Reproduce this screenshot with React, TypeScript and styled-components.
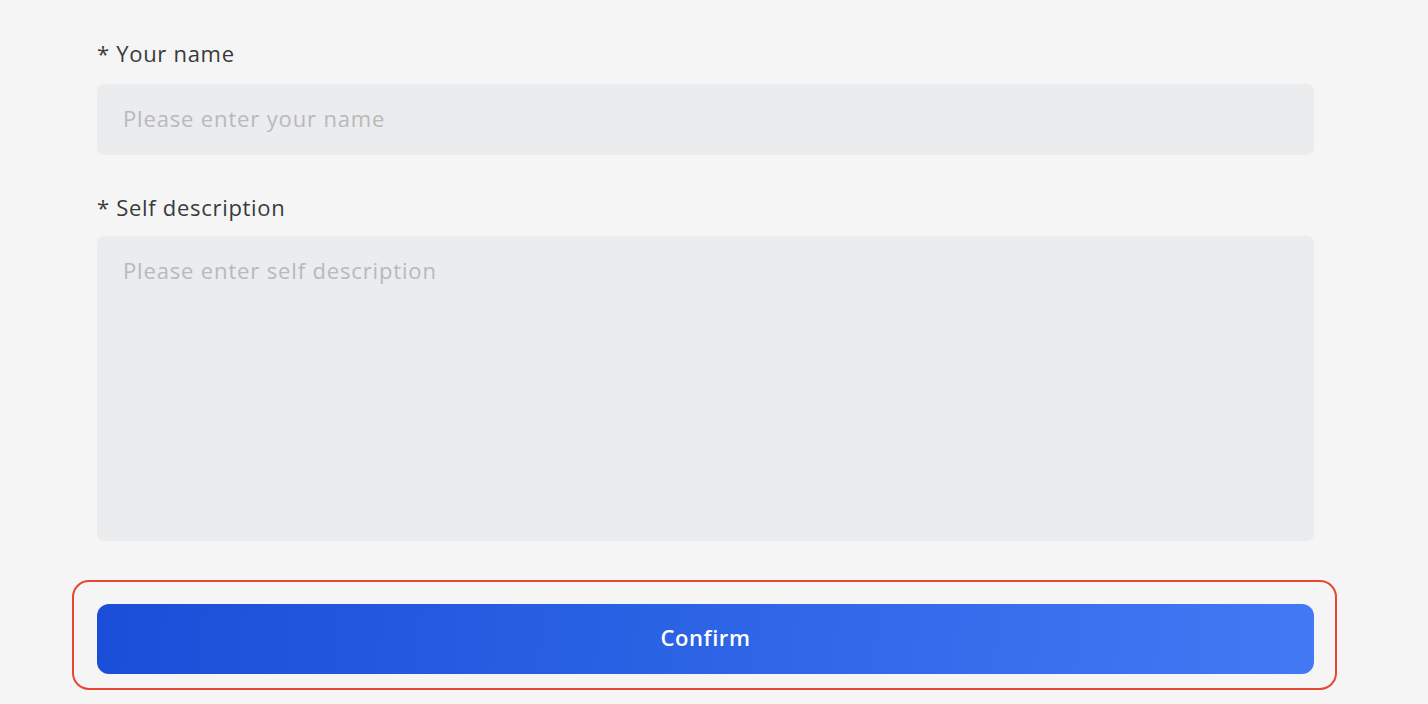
import React from "react";
import styled, { createGlobalStyle } from "styled-components";

const Global = createGlobalStyle`
  html, body {
    margin: 0;
    padding: 0;
    background: #f5f5f5;
  }
  body {
    font-family: "Open Sans", "Noto Sans", sans-serif;
  }
  * { box-sizing: border-box; }
`;

const Page = styled.div`
  width: 1428px;
  height: 704px;
  overflow: hidden;
  background: #f5f5f5;
  padding: 38px 0 0 72px;
`;

const Form = styled.form`
  display: flex;
  flex-direction: column;
  width: 1265px;
`;

const Field = styled.div<{ $gap: number; $mb: number }>`
  display: flex;
  flex-direction: column;
  gap: ${(p) => p.$gap}px;
  padding: 0 23px 0 25px;
  margin-bottom: ${(p) => p.$mb}px;
`;

const Label = styled.label`
  font-size: 22px;
  line-height: 30px;
  letter-spacing: 0.7px;
  color: #3a3a3a;
  font-weight: 400;
`;

const fieldBase = `
  width: 100%;
  border: none;
  outline: none;
  background: #ebecee;
  border-radius: 7px;
  font-family: "Open Sans", "Noto Sans", sans-serif;
  font-size: 22px;
  letter-spacing: 0.85px;
  color: #333;
  padding: 0 26px;
  &::placeholder { color: #b8b9bb; }
`;

const Input = styled.input`
  ${fieldBase}
  height: 71px;
  padding-bottom: 3px;
`;

const TextArea = styled.textarea`
  ${fieldBase}
  height: 305px;
  resize: none;
  padding-top: 19px;
  line-height: 30px;
`;

const Highlight = styled.div`
  border: 2px solid #e9462f;
  border-radius: 17px;
  padding: 22px 21px 14px 23px;
`;

const ConfirmButton = styled.button`
  width: 100%;
  height: 70px;
  border: none;
  border-radius: 12px;
  background: linear-gradient(95deg, #1a4ed9 0%, #2a62e4 45%, #4379f4 100%);
  color: #fff;
  font-family: "Open Sans", "Noto Sans", sans-serif;
  font-size: 22px;
  font-weight: 600;
  letter-spacing: 0.6px;
  padding: 0 0 5px;
  cursor: pointer;
`;

export default function App() {
  return (
    <>
      <Global />
      <Page>
        <Form onSubmit={(e) => e.preventDefault()}>
          <Field $gap={16} $mb={37}>
            <Label>* Your name</Label>
            <Input placeholder="Please enter your name" />
          </Field>
          <Field $gap={14} $mb={39}>
            <Label>* Self description</Label>
            <TextArea placeholder="Please enter self description" />
          </Field>
          <Highlight>
            <ConfirmButton type="submit">Confirm</ConfirmButton>
          </Highlight>
        </Form>
      </Page>
    </>
  );
}
